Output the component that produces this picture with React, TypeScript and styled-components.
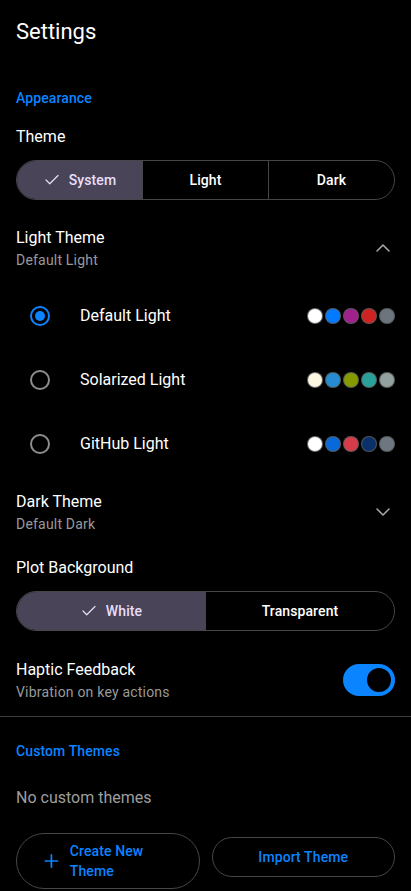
import { createGlobalStyle, styled } from "styled-components";
import { Check, ChevronDown, ChevronUp, Plus } from "lucide-react";

const GlobalStyle = createGlobalStyle`
  html, body {
    margin: 0;
    padding: 0;
    background: #000;
  }
  body {
    font-family: Roboto, "Noto Sans", sans-serif;
    color: #fff;
    -webkit-font-smoothing: antialiased;
  }
  * {
    box-sizing: border-box;
  }
`;

const BLUE = "#0a84ff";
const BORDER = "#46454a";

const themes = [
  {
    name: "Default Light",
    colors: ["#ffffff", "#007aff", "#a0208c", "#cf2222", "#6c757d"],
  },
  {
    name: "Solarized Light",
    colors: ["#fdf6e3", "#268bd2", "#859900", "#2aa198", "#93a1a1"],
  },
  {
    name: "GitHub Light",
    colors: ["#ffffff", "#0969da", "#d73a49", "#0a3069", "#6e7781"],
  },
];

const Page = styled.div`
  width: 411px;
  min-height: 891px;
  background: #000;
  overflow: hidden;
`;

const Header = styled.header`
  height: 62px;
  padding: 0 16px;
  display: flex;
  align-items: center;
  font-size: 22px;
  font-weight: 400;
`;

const Section = styled.section`
  padding: 16px 16px 6px;
  display: flex;
  flex-direction: column;
`;

const SectionTitle = styled.div`
  color: ${BLUE};
  font-size: 14px;
  font-weight: 500;
  line-height: 20px;
  margin: 10px 0 17px;
  letter-spacing: 0.1px;
`;

const Label = styled.div`
  font-size: 16px;
  line-height: 24px;
`;

const Sub = styled.div`
  font-size: 14px;
  line-height: 20px;
  color: #9a9a9a;
  letter-spacing: 0.2px;
`;

const Segmented = styled.div`
  display: flex;
  height: 40px;
  margin-top: 11px;
  border: 1px solid ${BORDER};
  border-radius: 20px;
  overflow: hidden;
`;

const Segment = styled.button<{ $active?: boolean }>`
  flex: 1;
  display: flex;
  align-items: center;
  justify-content: center;
  gap: 8px;
  border: none;
  border-left: 1px solid ${BORDER};
  background: ${({ $active }) => ($active ? "#4a4458" : "transparent")};
  color: ${({ $active }) => ($active ? "#e8def8" : "#fff")};
  font-family: inherit;
  font-size: 14px;
  font-weight: 500;
  letter-spacing: 0.1px;
  padding: 0;

  &:first-child {
    border-left: none;
  }
`;

const ExpandRow = styled.div<{ $first?: boolean }>`
  display: flex;
  align-items: center;
  justify-content: space-between;
  padding: 8px 0;
  margin-top: ${({ $first }) => ($first ? "18px" : "0")};
  color: #aaa;
`;

const TextBlock = styled.div`
  display: flex;
  flex-direction: column;
  color: #fff;
`;

const ThemeList = styled.div`
  display: flex;
  flex-direction: column;
  margin: 6px 0 6px;
`;

const ThemeRow = styled.div`
  height: 64px;
  display: flex;
  align-items: center;
  gap: 16px;
`;

const RadioWrap = styled.div`
  width: 48px;
  height: 48px;
  display: flex;
  align-items: center;
  justify-content: center;
`;

const Radio = styled.div<{ $checked?: boolean }>`
  width: 20px;
  height: 20px;
  border-radius: 50%;
  border: 2px solid ${({ $checked }) => ($checked ? BLUE : "#8e8e8e")};
  display: flex;
  align-items: center;
  justify-content: center;

  &::after {
    content: "";
    width: 10px;
    height: 10px;
    border-radius: 50%;
    background: ${({ $checked }) => ($checked ? BLUE : "transparent")};
  }
`;

const ThemeName = styled(Label)`
  flex: 1;
`;

const Swatches = styled.div`
  display: flex;
  gap: 2px;
`;

const Swatch = styled.span<{ $color: string }>`
  width: 16px;
  height: 16px;
  border-radius: 50%;
  background: ${({ $color }) => $color};
  border: 1px solid rgba(90, 90, 90, 0.9);
`;

const PlotLabel = styled(Label)`
  margin-top: 14px;
`;

const SwitchRow = styled.div`
  display: flex;
  align-items: center;
  justify-content: space-between;
  padding: 8px 0;
  margin-top: 19px;
`;

const Switch = styled.div<{ $on?: boolean }>`
  width: 52px;
  height: 32px;
  border-radius: 16px;
  background: ${({ $on }) => ($on ? BLUE : "#333")};
  display: flex;
  align-items: center;
  justify-content: ${({ $on }) => ($on ? "flex-end" : "flex-start")};
  padding: 0 4px;

  &::after {
    content: "";
    width: 24px;
    height: 24px;
    border-radius: 50%;
    background: #000;
  }
`;

const Divider = styled.hr`
  margin: 0;
  border: none;
  border-top: 1px solid #3c3c3c;
`;

const CustomTitle = styled(SectionTitle)`
  margin: 8px 0 25px;
`;

const Empty = styled(Label)`
  color: #9e9e9e;
`;

const ButtonRow = styled.div`
  display: flex;
  align-items: flex-start;
  gap: 12px;
  margin-top: 23px;
`;

const OutlineButton = styled.button<{ $tall?: boolean }>`
  flex: 1;
  min-height: 40px;
  margin-top: ${({ $tall }) => ($tall ? "0" : "4px")};
  padding: ${({ $tall }) => ($tall ? "7px 24px" : "0 24px")};
  border: 1px solid ${BORDER};
  border-radius: 28px;
  background: transparent;
  color: ${BLUE};
  font-family: inherit;
  font-size: 14px;
  font-weight: 500;
  line-height: 20px;
  letter-spacing: 0.1px;
  display: flex;
  align-items: center;
  justify-content: center;
  gap: 8px;
  text-align: left;
`;

const SegmentedGroup = ({
  options,
  active,
}: {
  options: string[];
  active: string;
}) => (
  <Segmented>
    {options.map((it) => (
      <Segment key={it} $active={it === active}>
        {it === active && <Check size={18} strokeWidth={1.6} />}
        {it}
      </Segment>
    ))}
  </Segmented>
);

export default function App() {
  return (
    <Page>
      <GlobalStyle />
      <Header>Settings</Header>
      <Section>
        <SectionTitle>Appearance</SectionTitle>
        <Label>Theme</Label>
        <SegmentedGroup options={["System", "Light", "Dark"]} active="System" />

        <ExpandRow $first>
          <TextBlock>
            <Label>Light Theme</Label>
            <Sub>Default Light</Sub>
          </TextBlock>
          <ChevronUp size={24} strokeWidth={1.5} />
        </ExpandRow>

        <ThemeList>
          {themes.map((theme, index) => (
            <ThemeRow key={theme.name}>
              <RadioWrap>
                <Radio $checked={index === 0} />
              </RadioWrap>
              <ThemeName>{theme.name}</ThemeName>
              <Swatches>
                {theme.colors.map((c, i) => (
                  <Swatch key={i} $color={c} />
                ))}
              </Swatches>
            </ThemeRow>
          ))}
        </ThemeList>

        <ExpandRow>
          <TextBlock>
            <Label>Dark Theme</Label>
            <Sub>Default Dark</Sub>
          </TextBlock>
          <ChevronDown size={24} strokeWidth={1.5} />
        </ExpandRow>

        <PlotLabel>Plot Background</PlotLabel>
        <SegmentedGroup options={["White", "Transparent"]} active="White" />

        <SwitchRow>
          <TextBlock>
            <Label>Haptic Feedback</Label>
            <Sub>Vibration on key actions</Sub>
          </TextBlock>
          <Switch $on />
        </SwitchRow>
      </Section>

      <Divider />

      <Section>
        <CustomTitle>Custom Themes</CustomTitle>
        <Empty>No custom themes</Empty>
        <ButtonRow>
          <OutlineButton $tall>
            <Plus size={24} strokeWidth={2} />
            <span>Create New Theme</span>
          </OutlineButton>
          <OutlineButton>Import Theme</OutlineButton>
        </ButtonRow>
      </Section>
    </Page>
  );
}
